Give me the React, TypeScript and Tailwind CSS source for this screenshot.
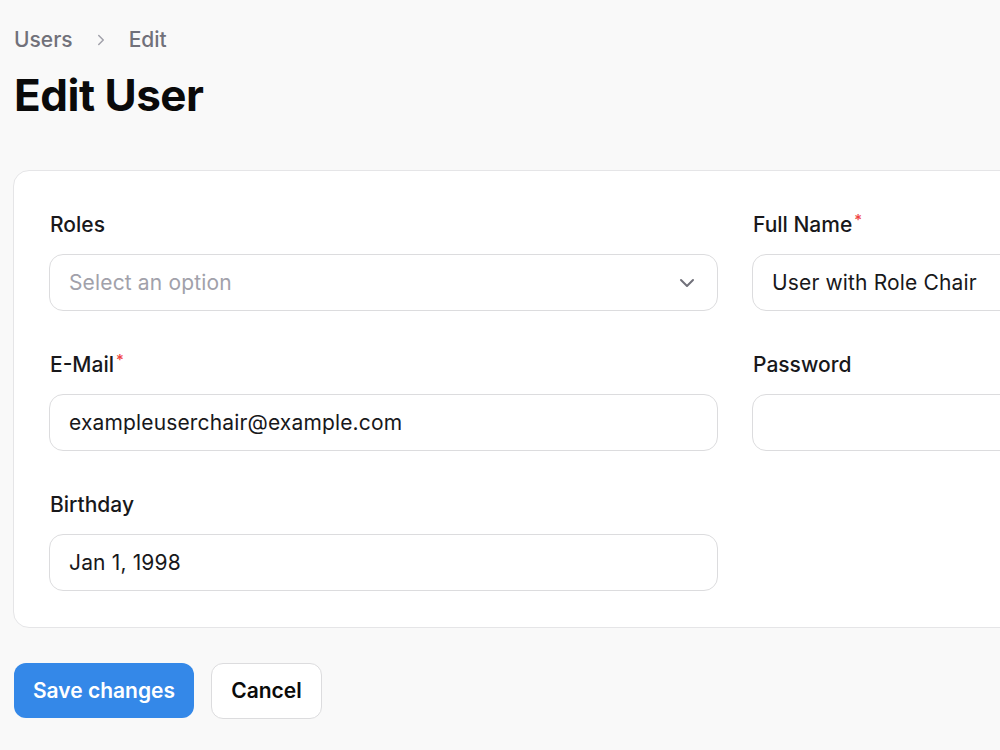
import { ChevronDown, ChevronRight } from 'lucide-react'

const inputCls =
  'h-[57px] w-full rounded-[14px] border border-[#dcdcde] bg-white px-[19px] flex items-center text-[21px] tracking-[0.15px] text-[#18181b]'

function Label({ text, required }: { text: string; required?: boolean }) {
  return (
    <div className="h-[28px] mb-[15px] pl-[1px] text-[21px] leading-[28px] font-medium text-[#18181b]">
      {text}
      {required && <sup className="text-[#ef4444] text-[15px] ml-[2px] font-medium">*</sup>}
    </div>
  )
}

export default function App() {
  return (
    <div
      className="w-[1000px] h-[750px] overflow-hidden bg-[#f9f9f9] px-[13px] pt-[27px]"
      style={{ fontFamily: 'Inter, "Noto Sans", sans-serif' }}
    >
      <div className="flex items-center gap-[19px] text-[21px] leading-[26px] text-[#71717a] font-medium pl-[1px]">
        <span>Users</span>
        <ChevronRight size={18} strokeWidth={2} className="text-[#a1a1aa]" />
        <span>Edit</span>
      </div>
      <h1 className="mt-[14px] pl-[1px] text-[44px] leading-[56px] font-bold tracking-[-0.5px] text-[#0a0a0a]">
        Edit User
      </h1>

      <div className="mt-[47px] w-[1460px] rounded-[16px] border border-[#e5e5e7] bg-white px-[35px] pt-[40px] pb-[36px]">
        <div className="grid grid-cols-[669px_669px] gap-x-[34px] gap-y-[40px]">
          <div>
            <Label text="Roles" />
            <div className={inputCls + ' justify-between pr-[18px]'}>
              <span className="text-[#a1a1aa]">Select an option</span>
              <ChevronDown size={24} strokeWidth={2} className="text-[#71717a]" />
            </div>
          </div>
          <div>
            <Label text="Full Name" required />
            <div className={inputCls}>User with Role Chair</div>
          </div>
          <div>
            <Label text="E-Mail" required />
            <div className={inputCls}>exampleuserchair@example.com</div>
          </div>
          <div>
            <Label text="Password" />
            <div className={inputCls}></div>
          </div>
          <div>
            <Label text="Birthday" />
            <div className={inputCls}>Jan 1, 1998</div>
          </div>
        </div>
      </div>

      <div className="mt-[35px] flex gap-[17px] pl-[1px]">
        <button className="h-[55px] w-[180px] rounded-[12px] bg-[#3488e8] text-white text-[21px] font-semibold">
          Save changes
        </button>
        <button className="h-[56px] w-[111px] rounded-[12px] border border-[#dcdcde] bg-white text-[#0a0a0a] text-[21px] font-semibold">
          Cancel
        </button>
      </div>
    </div>
  )
}
